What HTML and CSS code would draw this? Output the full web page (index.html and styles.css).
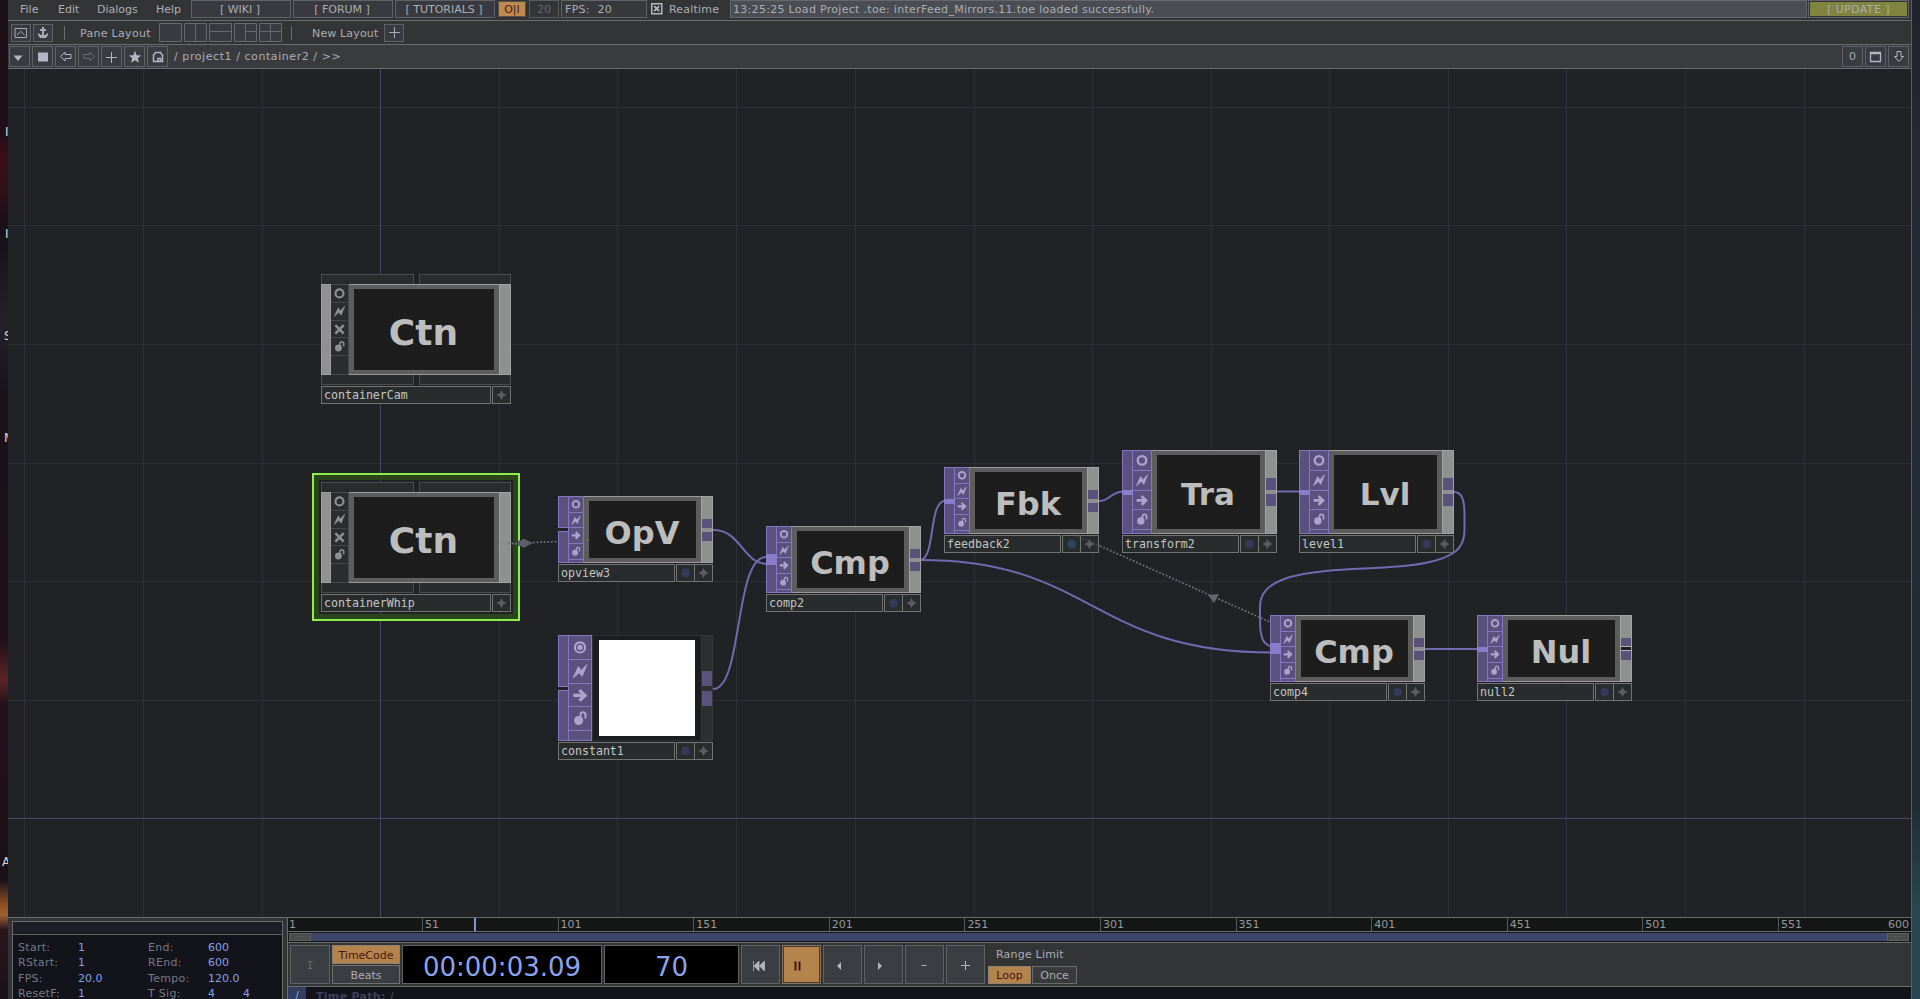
FILE: index.html
```html
<!DOCTYPE html>
<html lang="en">
  <head>
    <meta charset="UTF-8" />
    <meta name="viewport" content="width=device-width, initial-scale=1.0" />
    <title>interFeed_Mirrors.11.toe</title>
    <link rel="stylesheet" href="styles.css">
  </head>
  <body>
    <!-- shared icons -->
    <svg class="defs" width="0" height="0">
      <symbol id="i-ring" viewBox="0 0 16 16"><circle cx="8" cy="8" r="3.8" fill="none" stroke="currentColor" stroke-width="2.1" /></symbol>
      <symbol id="i-ring-on" viewBox="0 0 16 16"><circle cx="8" cy="8" r="3.7" fill="none" stroke="currentColor" stroke-width="1.6" /><circle cx="8" cy="8" r="1.9" fill="currentColor" /></symbol>
      <symbol id="i-bolt" viewBox="0 0 16 16"><path d="M3 12.8 6.800 4.500 8.800 7.400 13 3 9.600 11.600 7.400 8.900Z" fill="currentColor" stroke="currentColor" stroke-width=".6" /></symbol>
      <symbol id="i-cross" viewBox="0 0 16 16"><path d="M4 4l8 8M12 4l-8 8" stroke="currentColor" stroke-width="2.4" /></symbol>
      <symbol id="i-arrow" viewBox="0 0 16 16"><path d="M3.2 8h8M7.600 4.200l4 3.800-4 3.800" fill="none" stroke="currentColor" stroke-width="2.4" /></symbol>
      <symbol id="i-lock" viewBox="0 0 16 16"><circle cx="7" cy="9.500" r="3.300" fill="currentColor" /><path d="M8.400 7.200V5.300a1.800 1.800 0 0 1 3.600 0V8" fill="none" stroke="currentColor" stroke-width="1.5" /></symbol>
      <symbol id="i-star4" viewBox="0 0 16 16"><path d="M8 2 9.900 6.100 14 8 9.900 9.900 8 14 6.100 9.900 2 8 6.100 6.100Z" fill="currentColor" /></symbol>
    </svg>

    <div class="desktop left">
      <span class="l1">I</span><span class="l2">I</span><span class="l3">S</span><span class="l4">M</span><span class="l5">A</span>
    </div>

    <div class="window">
      <div class="menubar">
        <div class="menus"><span>File</span><span>Edit</span><span>Dialogs</span><span>Help</span></div>
        <div class="link">[ WIKI ]</div>
        <div class="link">[ FORUM ]</div>
        <div class="link">[ TUTORIALS ]</div>
        <div class="power">O|I</div>
        <div class="rate">20</div>
        <div class="fps">FPS:&nbsp; 20</div>
        <svg class="check" width="12" height="12" viewBox="0 0 12 12"><rect x=".75" y=".75" width="10" height="10" fill="none" stroke="#b4b6bc" stroke-width="1.5" /><path d="M3.2 3.2l5 5M8.2 3.2l-5 5" stroke="#b4b6bc" stroke-width="1.8" /></svg>
        <span class="realtime">Realtime</span>
        <div class="message">13:25:25 Load Project .toe: interFeed_Mirrors.11.toe loaded successfully.</div>
        <div class="update"><span>[ UPDATE ]</span></div>
      </div>

      <div class="layoutbar">
        <div class="tool"><svg width="14" height="12" viewBox="0 0 14 12"><path d="M1 1.5h11.5v9H1zM3 8l3.700-3.700L10.500 8" fill="none" stroke="#a9abbb" /></svg></div>
        <div class="tool"><svg width="14" height="14" viewBox="0 0 14 14"><path d="M6 1h2v2h2v2H8v4h1l3-2v2l-2 3H4L2 9V7l3 2h1V5H4V3h2z" fill="#a9abbb" /></svg></div>
        <i class="sep"></i>
        <span class="pane-label">Pane Layout</span>
        <div class="panes">
          <svg width="23" height="19"><path d="M.5 .5h22v18h-22z" /></svg>
          <svg width="23" height="19"><path d="M.5 .5h22v18h-22zM11.5 0v19" /></svg>
          <svg width="23" height="19"><path d="M.5 .5h22v18h-22zM0 8.5h23" /></svg>
          <svg width="23" height="19"><path d="M.5 .5h22v18h-22zM11.5 0v19M11.5 8.5h11" /></svg>
          <svg width="23" height="19"><path d="M.5 .5h22v18h-22zM11.5 0v19M0 8.5h23" /></svg>
        </div>
        <i class="sep two"></i>
        <span class="new-label">New Layout</span>
        <div class="tool"><svg width="11" height="11"><path d="M5.5 0v11M0 5.5h11" stroke="#a9abbb" /></svg></div>
      </div>

      <div class="pathbar">
        <div class="tool down"><svg width="14" height="14"><path d="M2.5 5.5h9L7 11z" fill="#b4b6c6" /></svg></div>
        <div class="tool"><svg width="14" height="14"><path d="M2 2.500h10v9H2z" fill="#b4b6c6" /></svg></div>
        <div class="tool"><svg width="14" height="14"><path d="M1.500 6.500 6 2v2.500h6v4H6V11z" fill="none" stroke="#b4b6c6" /></svg></div>
        <div class="tool dim"><svg width="14" height="14"><path d="M12.500 6.500 8 2v2.500H2v4h6V11z" fill="none" stroke="#6c6e76" /></svg></div>
        <div class="tool"><svg width="12" height="12"><path d="M5.500 1v11M0 6.500h11" stroke="#b4b6c6" /></svg></div>
        <div class="tool"><svg width="14" height="14"><path d="M7 .8 8.700 5.200 13.300 5.400 9.700 8.200 11 12.800 7 10.200 3 12.800 4.300 8.200 .7 5.400 5.300 5.200z" fill="#b4b6c6" /></svg></div>
        <div class="tool"><svg width="14" height="14"><path d="M2 6 4.500 2.500h5L12 6M2.500 5.500v6h9v-6M7 11V8.500H9.500V11" fill="none" stroke="#b4b6c6" stroke-width="1.500" /></svg></div>
        <span class="path">/ project1 / container2 / &gt;&gt;</span>
        <div class="tool push">0</div>
        <div class="tool"><svg width="13" height="12"><path d="M1.500 1.500h10v9h-10zM1 2.500h11" fill="none" stroke="#b4b6c6" stroke-width="1.300" /></svg></div>
        <div class="tool"><svg width="12" height="13"><path d="M4 1.500h4v5h2.500L6 11.500 1.500 6.500H4z" fill="none" stroke="#b4b6c6" /></svg></div>
      </div>

      <div class="network">
        <svg class="wires" width="1903" height="848" viewBox="8 69 1903 848">
          <g class="grid">
            <path d="M24.500 69v848M143 69v848M262 69v848M499 69v848M617.500 69v848M736.500 69v848M855 69v848M974 69v848M1092.500 69v848M1211 69v848M1329 69v848M1448 69v848M1685 69v848M1804 69v848" />
            <path d="M8 107h1903M8 225h1903M8 344h1903M8 463h1903M8 581h1903M8 700h1903" />
            <path class="axis-soft" d="M1566 69v848" />
            <path class="axis" d="M380 69v848M8 818.500h1903" />
          </g>
          <g class="wire">
            <path d="M713 530C742 530 742 564 768 564" />
            <path d="M713 689C743 689 734 557 766 557" />
            <path d="M921 560C936 556 928 500.500 946 500.500" />
            <path d="M921 560C1092 560 1092 652.500 1272 652.500" />
            <path d="M1099 501C1111 501 1110 491.500 1124 491.500" />
            <path d="M1277 491.500H1301" />
            <path d="M1454 492C1462 492 1464.500 500 1464.500 515V530C1464.500 548 1455 557 1425 563C1385 571 1330 566 1290 577C1268 584 1260 593 1260 607V620C1260 637 1263 645 1272 646.500" />
            <path d="M1425 649H1479" />
          </g>
        </svg>

        <div class="node comp n-cam">
          <div class="flaps"><i></i><i></i></div>
          <div class="body">
            <div class="in"></div>
            <div class="flags"><svg><use href="#i-ring" /></svg><svg><use href="#i-bolt" /></svg><svg><use href="#i-cross" /></svg><svg><use href="#i-lock" /></svg></div>
            <div class="view"><span>Ctn</span></div>
            <div class="out"></div>
          </div>
          <div class="flaps bottom"><i></i><i></i></div>
          <div class="name"><span>containerCam</span><b><svg><use href="#i-star4" /></svg></b></div>
        </div>

        <div class="selection"></div>
        <div class="node comp n-whip">
          <div class="flaps"><i></i><i></i></div>
          <div class="body">
            <div class="in"></div>
            <div class="flags"><svg><use href="#i-ring" /></svg><svg><use href="#i-bolt" /></svg><svg><use href="#i-cross" /></svg><svg><use href="#i-lock" /></svg></div>
            <div class="view"><span>Ctn</span></div>
            <div class="out"></div>
          </div>
          <div class="flaps bottom"><i></i><i></i></div>
          <div class="name"><span>containerWhip</span><b><svg><use href="#i-star4" /></svg></b></div>
        </div>

        <div class="node top n-opview">
          <div class="body">
            <div class="in split"><i></i><i></i></div>
            <div class="flags"><svg><use href="#i-ring" /></svg><svg><use href="#i-bolt" /></svg><svg><use href="#i-arrow" /></svg><svg><use href="#i-lock" /></svg></div>
            <div class="view"><span>OpV</span></div>
            <div class="out"><i></i><i></i></div>
          </div>
          <div class="name"><span>opview3</span><em></em><b><svg><use href="#i-star4" /></svg></b></div>
        </div>

        <div class="node top large n-constant">
          <div class="body">
            <div class="in split"><i></i><i></i></div>
            <div class="flags"><svg><use href="#i-ring-on" /></svg><svg><use href="#i-bolt" /></svg><svg><use href="#i-arrow" /></svg><svg><use href="#i-lock" /></svg></div>
            <div class="view"><div class="white"></div></div>
            <div class="out"><i></i><i></i></div>
          </div>
          <div class="name"><span>constant1</span><em></em><b><svg><use href="#i-star4" /></svg></b></div>
        </div>

        <div class="node top n-comp2">
          <div class="body">
            <div class="in"><u class="multi"></u></div>
            <div class="flags"><svg><use href="#i-ring" /></svg><svg><use href="#i-bolt" /></svg><svg><use href="#i-arrow" /></svg><svg><use href="#i-lock" /></svg></div>
            <div class="view"><span>Cmp</span></div>
            <div class="out"><i></i><i></i></div>
          </div>
          <div class="name"><span>comp2</span><em></em><b><svg><use href="#i-star4" /></svg></b></div>
        </div>

        <div class="node top n-feedback">
          <div class="body">
            <div class="in"><u></u></div>
            <div class="flags"><svg><use href="#i-ring" /></svg><svg><use href="#i-bolt" /></svg><svg><use href="#i-arrow" /></svg><svg><use href="#i-lock" /></svg></div>
            <div class="view"><span>Fbk</span></div>
            <div class="out"><i></i><i></i></div>
          </div>
          <div class="name"><span>feedback2</span><em class="teal"></em><b><svg><use href="#i-star4" /></svg></b></div>
        </div>

        <div class="node top tall n-transform">
          <div class="body">
            <div class="in"><u></u></div>
            <div class="flags"><svg><use href="#i-ring" /></svg><svg><use href="#i-bolt" /></svg><svg><use href="#i-arrow" /></svg><svg><use href="#i-lock" /></svg></div>
            <div class="view"><span>Tra</span></div>
            <div class="out"><i></i><i></i></div>
          </div>
          <div class="name"><span>transform2</span><em></em><b><svg><use href="#i-star4" /></svg></b></div>
        </div>

        <div class="node top tall n-level">
          <div class="body">
            <div class="in"><u></u></div>
            <div class="flags"><svg><use href="#i-ring" /></svg><svg><use href="#i-bolt" /></svg><svg><use href="#i-arrow" /></svg><svg><use href="#i-lock" /></svg></div>
            <div class="view"><span>Lvl</span></div>
            <div class="out"><i></i><i></i></div>
          </div>
          <div class="name"><span>level1</span><em></em><b><svg><use href="#i-star4" /></svg></b></div>
        </div>

        <div class="node top n-comp4">
          <div class="body">
            <div class="in"><u class="multi"></u></div>
            <div class="flags"><svg><use href="#i-ring" /></svg><svg><use href="#i-bolt" /></svg><svg><use href="#i-arrow" /></svg><svg><use href="#i-lock" /></svg></div>
            <div class="view"><span>Cmp</span></div>
            <div class="out"><i></i><i></i></div>
          </div>
          <div class="name"><span>comp4</span><em></em><b><svg><use href="#i-star4" /></svg></b></div>
        </div>

        <div class="node top n-null">
          <div class="body">
            <div class="in"><u></u></div>
            <div class="flags"><svg><use href="#i-ring" /></svg><svg><use href="#i-bolt" /></svg><svg><use href="#i-arrow" /></svg><svg><use href="#i-lock" /></svg></div>
            <div class="view"><span>Nul</span></div>
            <div class="out free"><i></i><i></i></div>
          </div>
          <div class="name"><span>null2</span><em></em><b><svg><use href="#i-star4" /></svg></b></div>
        </div>

        <!-- reference links run over the nodes -->
        <svg class="wires" width="1903" height="848" viewBox="8 69 1903 848">
          <path class="dots" d="M508 543.500L520 543.500M533 542.500L558 541.500" />
          <path class="dots faint" d="M498 543.500H508M560 541.500L590 540.500" />
          <path class="dots" d="M1100 546L1270 622" />
          <path class="dots faint" d="M1066 531L1100 546" />
          <path d="M518 540.500h3l2-2 10 4.500-10 5-2-2h-3z" fill="#59606c" />
          <path d="M1208 595L1219 594 1214 603z" fill="#64676d" />
        </svg>
      </div>

      <div class="transport">
        <div class="info">
          <div class="info-box">
            <div class="info-head"></div>
            <div class="info-grid">
              <span>Start:</span><b>1</b><span>End:</span><b>600</b><b></b>
              <span>RStart:</span><b>1</b><span>REnd:</span><b>600</b><b></b>
              <span>FPS:</span><b>20.0</b><span>Tempo:</span><b>120.0</b><b></b>
              <span>ResetF:</span><b>1</b><span>T Sig:</span><b>4</b><b>4</b>
            </div>
          </div>
        </div>
        <div class="timeline">
          <div class="ruler">
            <span class="first">1</span><span>51</span><span>101</span><span>151</span><span>201</span><span>251</span><span>301</span><span>351</span><span>401</span><span>451</span><span>501</span><span>551</span><span class="last">600</span>
            <i class="playhead"></i>
          </div>
          <div class="range"><i>...</i><div class="bar"></div><i>...</i></div>
          <div class="controls">
            <div class="btn dim">I</div>
            <div class="stack"><div class="on">TimeCode</div><div>Beats</div></div>
            <div class="lcd code">00:00:03.09</div>
            <div class="lcd frame">70</div>
            <div class="btn nudge"><svg width="13" height="12"><path d="M1.500 1v10M7 1v10L2 6zM12.500 1v10L7.500 6z" fill="#b4b6bc" stroke="#b4b6bc" stroke-width=".8" /></svg></div>
            <div class="btn on nudge-more"><svg width="8" height="10"><path d="M1.500 .5v9M5.500 .5v9" stroke="#4a1010" stroke-width="2" /></svg></div>
            <div class="btn nudge-more"><svg width="6" height="10"><path d="M5 1v8L1 5z" fill="#b4b6bc" /></svg></div>
            <div class="btn nudge-more"><svg width="6" height="10"><path d="M1 1v8l4-4z" fill="#b4b6bc" /></svg></div>
            <div class="btn"><svg width="7" height="3"><path d="M.5 1.500h5" stroke="#b4b6bc" /></svg></div>
            <div class="btn"><svg width="9" height="9"><path d="M4.500 0v9M0 4.500h9" stroke="#b4b6bc" /></svg></div>
            <div class="limit">
              <p>Range Limit</p>
              <div class="toggle"><div class="on">Loop</div><div>Once</div></div>
            </div>
          </div>
          <div class="timepath"><span>/</span><b>Time Path: /</b></div>
        </div>
      </div>
    </div>

    <div class="desktop right"></div>
  </body>
</html>
```

FILE: styles.css
```css
* {
  box-sizing: border-box;
}
body {
  margin: 0;
  width: 1920px;
  height: 999px;
  overflow: hidden;
  display: flex;
  background: #1a1a20;
  color: #acaeb5;
  font-family: "DejaVu Sans", Verdana, sans-serif;
  font-size: 11px;
  line-height: 13px;
}
svg {
  display: block;
}
.defs {
  position: absolute;
}
.desktop {
  width: 8px;
  flex: none;
  position: relative;
  overflow: hidden;
}
.desktop.left {
  background: linear-gradient(#1c1018 0, #1e0f19 130px, #3c0e1c 160px, #30101a 185px, #180f18 230px, #25202a 320px, #1a1119 400px, #1f1019 640px, #5a2424 680px, #24111c 705px, #1a1018 880px, #8f5022 905px, #a06030 915px, #28151e 930px, #1c1219 999px);
}
.desktop.right {
  background: linear-gradient(#22232c 0, #262836 200px, #232c38 450px, #202a34 800px, #2a4650 910px, #2a4450 999px);
}
.desktop span {
  position: absolute;
  left: 4px;
  color: #d8d8dc;
  font-size: 12px;
}
.desktop .l1 { top: 126px; left: 5px; }
.desktop .l2 { top: 228px; left: 5px; }
.desktop .l3 { top: 330px; }
.desktop .l4 { top: 432px; }
.desktop .l5 { top: 856px; left: 2px; }

.window {
  width: 1904px;
  display: flex;
  flex-direction: column;
  border-right: 1px solid #5c5e62;
}

/* top bars */
.menubar {
  height: 21px;
  display: flex;
  background: #333436;
  border-bottom: 1px solid #6b6c70;
}
.menus {
  width: 183px;
  padding: 3px 0 0 12px;
  display: flex;
}
.menus span:nth-child(1) { width: 38px; }
.menus span:nth-child(2) { width: 39px; }
.menus span:nth-child(3) { width: 59px; }
.link {
  width: 100px;
  height: 18px;
  margin-right: 2px;
  padding: 2px 2px 0 0;
  text-align: center;
  background: #383a3f;
  border: 1px solid #616267;
}
.power {
  width: 28px;
  height: 16px;
  margin: 1px 3px 0 1px;
  text-align: center;
  background: #bd8a50;
  border: 1px solid #55504a;
  color: #45150f;
  padding-top: 1px;
}
.rate {
  width: 30px;
  height: 18px;
  margin-right: 2px;
  padding-top: 2px;
  text-align: center;
  border: 1px solid #5a5b60;
  color: #66686e;
}
.fps {
  width: 86px;
  height: 18px;
  padding: 2px 0 0 3px;
  background: #37393d;
  border: 1px solid #616267;
  letter-spacing: 0.3px;
}
.check {
  margin: 3px 6px 0 4px;
}
.realtime {
  width: 61px;
  padding-top: 3px;
  letter-spacing: 0.2px;
}
.message {
  width: 1077px;
  height: 18px;
  padding: 2px 0 0 2px;
  margin-right: 1px;
  background: #4a4d54;
  border: 1px solid #66686e;
  letter-spacing: 0.3px;
}
.update {
  width: 101px;
  height: 18px;
  padding: 1px;
  border: 1px solid #616267;
}
.update span {
  display: block;
  height: 14px;
  padding-top: 1px;
  text-align: center;
  background: #80843f;
  letter-spacing: 0.4px;
}
.layoutbar {
  height: 24px;
  padding-left: 3px;
  display: flex;
  align-items: center;
  background: #333436;
  border-bottom: 1px solid #6b6c70;
}
.tool {
  width: 21px;
  height: 21px;
  margin-right: 2px;
  flex: none;
  display: flex;
  align-items: center;
  justify-content: center;
  background: #383b40;
  border: 1px solid #606166;
}
.layoutbar .tool {
  width: 20px;
  height: 18px;
}
.sep {
  width: 1px;
  height: 14px;
  margin: 0 15px 0 9px;
  background: #6b6c70;
}
.sep.two {
  margin: 0 20px 0 9px;
}
.pane-label {
  width: 79px;
  padding-top: 1px;
  letter-spacing: 0.3px;
}
.new-label {
  width: 72px;
  padding-top: 1px;
  letter-spacing: 0.15px;
}
.panes {
  display: flex;
  gap: 2px;
}
.panes path {
  fill: #383a3f;
  stroke: #66686d;
}
.pathbar {
  height: 24px;
  padding-left: 1px;
  display: flex;
  align-items: center;
  background: #3a3b3f;
  border-bottom: 1px solid #6b6c70;
}
.tool.down {
  padding-right: 3px;
}
.path {
  margin-left: 4px;
  letter-spacing: 0.57px;
}
.push {
  margin-left: auto;
}
.pathbar .tool:last-child {
  margin-right: 2px;
}

/* network editor */
.network {
  height: 848px;
  position: relative;
  overflow: hidden;
  background: #202225;
}
.wires {
  position: absolute;
  left: 0;
  top: 0;
}
.grid path {
  stroke: #2d3034;
  shape-rendering: crispEdges;
}
.grid .axis {
  stroke: #47466a;
}
.grid .axis-soft {
  stroke: #33344a;
}
.wire path {
  fill: none;
  stroke: #7468b0;
  stroke-width: 2;
}
.dots {
  stroke: #6c6f75;
  stroke-width: 1.8;
  stroke-dasharray: 1.8 1.8;
}
.dots.faint {
  opacity: 0.35;
}
.node {
  position: absolute;
  width: 155px;
}
.node.comp {
  width: 190px;
}
.n-cam { left: 313px; top: 205px; }
.n-whip { left: 313px; top: 413px; }
.n-opview { left: 550px; top: 427px; }
.n-constant { left: 550px; top: 566px; }
.n-comp2 { left: 758px; top: 457px; }
.n-feedback { left: 936px; top: 398px; }
.n-transform { left: 1114px; top: 381px; }
.n-level { left: 1291px; top: 381px; }
.n-comp4 { left: 1262px; top: 546px; }
.n-null { left: 1469px; top: 546px; }
.selection {
  position: absolute;
  left: 304px;
  top: 404px;
  width: 208px;
  height: 148px;
  border: 2px solid #8ded4c;
  box-shadow: inset 0 0 0 5px #2a441b;
}
.body {
  height: 67px;
  display: flex;
}
.tall .body {
  height: 84px;
}
.large .body {
  height: 106px;
}
.comp .body {
  height: 91px;
}
.flaps {
  height: 10px;
  display: flex;
  gap: 5px;
}
.flaps i {
  flex: 1;
  background: #292b2c;
  border: 1px solid #4b4d4e;
  border-bottom: 0;
}
.flaps.bottom i {
  border: 1px solid #4b4d4e;
  border-top: 0;
}
.in {
  width: 11px;
  position: relative;
  background: #5b517e;
  border: 1px solid #8377c2;
}
.comp .in {
  width: 10px;
  background: #909091;
  border-color: #a0a0a0;
}
.in.split {
  display: flex;
  flex-direction: column;
  gap: 3px;
  background: none;
  border: 0;
}
.in.split i {
  flex: 1;
  background: #5b517e;
  border: 1px solid #8377c2;
}
/* connected input */
.in u {
  position: absolute;
  left: -1px;
  right: -1px;
  top: calc(50% - 2px);
  height: 5px;
  background: #897dcc;
}
.in u.multi {
  top: calc(50% - 6px);
  height: 11px;
}
.flags {
  width: 16px;
  margin-left: -1px;
  display: flex;
  flex-direction: column;
  background: #5b517e;
  border: 1px solid #8377c2;
  color: #aba4cc;
}
.flags svg {
  width: 100%;
  height: 15.7px;
  flex: none;
  border-bottom: 1px solid #8377c2;
}
.tall .flags {
  width: 20px;
}
.tall .flags svg {
  height: 19.8px;
}
.large .flags {
  width: 24px;
}
.large .flags svg {
  height: 23.8px;
}
.comp .flags {
  width: 18px;
  margin-left: 0;
  background: #2b2c2d;
  border-color: #48494a;
  border-left: 0;
  color: #8f8f8f;
}
.comp .flags svg {
  height: 17.8px;
  border-color: #48494a;
}
.view {
  flex: 1;
  border: 5px solid #5c5d5c;
  border-top-width: 4px;
  border-bottom-width: 4px;
  background: #1d1d1e;
  box-shadow: 0 -1px #9b9b9b, 0 1px #9b9b9b;
  margin: 1px 0;
  display: flex;
  align-items: center;
  justify-content: center;
}
.view span {
  color: #bdbdbd;
  font-size: 32px;
  font-weight: bold;
  line-height: 36px;
  padding: 6px 1px 0 0;
}
.comp .view {
  margin-right: 0;
}
.comp .view span {
  font-size: 36px;
  padding-top: 7px;
}
.tall .view span {
  font-size: 31px;
  padding-top: 4px;
}
.out {
  width: 12px;
  padding-top: 22px;
  background: #8f9090;
  border: 1px solid #a2a3a3;
}
.out i {
  display: block;
  height: 9px;
  margin-bottom: 4px;
  background: #5b527c;
}
.tall .out {
  padding-top: 27px;
}
.tall .out i {
  height: 12px;
}
.large .view {
  margin: 0;
  border: 1px solid #303132;
  border-right: 0;
  box-shadow: none;
  background: #1c1d1e;
}
.white {
  width: 96px;
  height: 96px;
  background: #fff;
}
.large .out {
  background: #2d2e2f;
  border-color: #363738;
  padding-top: 35px;
}
.large .out i {
  height: 15px;
  margin-bottom: 5px;
}
.out.free i:first-child {
  height: 8px;
  margin-bottom: 0;
}
.out.free i:last-child {
  margin-top: 5px;
}
.out.free {
  background: linear-gradient(#8f9090 30px, #b4b4b4 30px, #b4b4b4 31px, #1d1d1e 31px, #1d1d1e 34px, #b4b4b4 34px, #b4b4b4 35px, #8f9090 35px);
}
.name {
  height: 18px;
  margin-top: 1px;
  display: flex;
}
.name span {
  flex: 1;
  padding: 2px 0 0 2px;
  background: #292c2d;
  border: 1px solid #717473;
  color: #c4c6c6;
  font: 11.6px/13px "DejaVu Sans Mono", monospace;
}
.name em {
  width: 19px;
  margin: 0 -1px 0 1px;
  background: radial-gradient(circle at 50% 50%, #343a5c 0, #343a5c 3.5px, #292c2d 5px);
  border: 1px solid #717473;
}
.name em.teal {
  background: radial-gradient(circle at 50% 50%, #2d4660 0, #2d4660 3.5px, #292c2d 5px);
}
.name b {
  width: 19px;
  padding: 1px;
  background: #292c2d;
  border: 1px solid #717473;
  color: #5b5d5f;
}
.name b svg {
  width: 15px;
  height: 14px;
}
.comp .name b {
  margin-left: 1px;
}

/* transport */
.transport {
  height: 82px;
  display: flex;
  background: #333436;
  border-top: 1px solid #6b6c70;
}
.info {
  width: 279px;
  padding: 3px 4px 0 4px;
}
.info-box {
  height: 78px;
  background: #13131b;
  border: 1px solid #6b6c70;
  border-bottom: 0;
  overflow: hidden;
}
.info-head {
  height: 13px;
  background: #1d1d27;
  border-bottom: 1px solid #5c5e62;
}
.info-grid {
  padding: 5px 0 0 5px;
  display: grid;
  grid-template-columns: 60px 70px 60px 35px 20px;
  grid-auto-rows: 15.3px;
  align-items: center;
  color: #777a82;
}
.info-grid span {
  letter-spacing: 0.3px;
}
.info-grid b {
  font-weight: normal;
  color: #86a0e6;
}
.timeline {
  flex: 1;
  min-width: 0;
  border-left: 1px solid #6b6c70;
  overflow: hidden;
}
.ruler {
  height: 14px;
  position: relative;
  display: flex;
  background: #151616;
  border-bottom: 1px solid #6b6c70;
  color: #96989c;
}
.ruler span {
  flex: none;
  width: 135.6px;
  padding-left: 2px;
  border-left: 1px solid #55585a;
}
.ruler .first {
  width: 134px;
  padding-left: 1px;
  border: 0;
}
.ruler .last {
  position: absolute;
  right: 2px;
  width: auto;
  border: 0;
}
.playhead {
  position: absolute;
  left: 186px;
  top: 0;
  width: 2px;
  height: 13px;
  background: #7f94d0;
}
.range {
  height: 11px;
  padding: 1px 2px 1px 1px;
  display: flex;
  background: #151616;
  border-bottom: 1px solid #6b6c70;
}
.range i {
  width: 22px;
  height: 8px;
  overflow: hidden;
  background: #4b4d4c;
  border: 1px solid #606261;
  color: #777;
  font: 8px/2px "DejaVu Sans", sans-serif;
  text-align: center;
}
.range .bar {
  flex: 1;
  height: 8px;
  background: #3c4668;
}
.controls {
  height: 44px;
  padding: 2px;
  display: flex;
  gap: 2px;
  border-bottom: 1px solid #6b6c70;
}
.btn {
  width: 39px;
  height: 39px;
  padding-top: 2px;
  display: flex;
  align-items: center;
  justify-content: center;
  background: #3a3d42;
  border: 1px solid #5f6164;
}
.btn.on {
  background: #b5844c;
  border: 1px solid #85705a;
  box-shadow: inset 0 0 0 1px #453d35;
}
.btn.dim {
  color: #6a6c70;
  font-family: "DejaVu Sans Mono", monospace;
  width: 40px;
}
.btn.nudge {
  padding-right: 4px;
}
.btn.nudge-more {
  padding-right: 8px;
}
.stack {
  width: 68px;
  display: flex;
  flex-direction: column;
  gap: 1px;
}
.stack div {
  height: 19px;
  padding-top: 3px;
  text-align: center;
  background: #3a3d42;
  border: 1px solid #6f7173;
}
.stack .on,
.toggle .on {
  background: #b5844c;
  border-color: #8e8170;
  color: #45150f;
}
.lcd {
  height: 39px;
  background: #000;
  border: 1px solid #5f6164;
  color: #8ba3ea;
  font-size: 26px;
  line-height: 43px;
  text-align: center;
}
.code {
  width: 200px;
}
.frame {
  width: 135px;
}
.limit {
  margin-left: 1px;
}
.limit p {
  margin: 3px 0 5px 8px;
  letter-spacing: 0.2px;
}
.toggle {
  display: flex;
  gap: 1px;
}
.toggle div {
  width: 43px;
  height: 18px;
  padding-top: 2px;
  text-align: center;
  background: #383a3e;
  border: 1px solid #6b6c70;
}
.toggle div + div {
  width: 45px;
}
.timepath {
  height: 13px;
  display: flex;
  background: #13131b;
  color: #3d405c;
}
.timepath span {
  width: 18px;
  padding-top: 2px;
  text-align: center;
  background: #333d60;
  color: #8ba3ea;
}
.timepath b {
  padding: 3px 0 0 10px;
  letter-spacing: 0.3px;
}
```
